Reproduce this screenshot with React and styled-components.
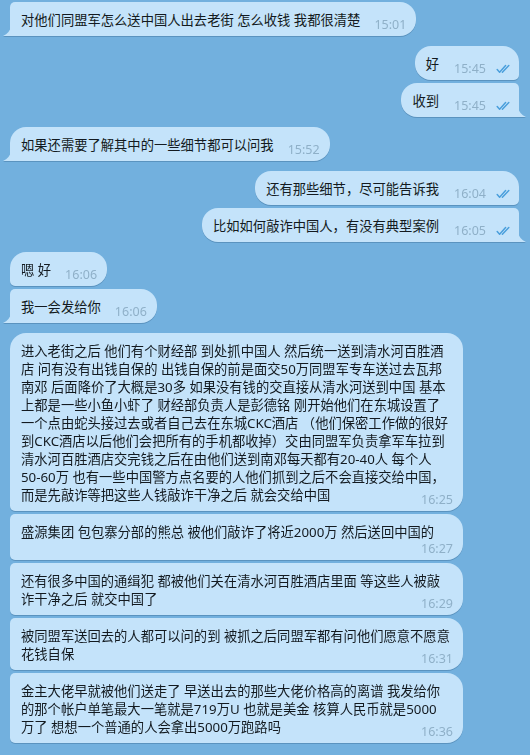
import React from 'react';
import styled, { createGlobalStyle } from 'styled-components';

const GlobalStyle = createGlobalStyle`
  html, body { margin: 0; padding: 0; background: #72b0de; }
  body {
    font-family: "Noto Sans", "Noto Sans CJK SC", sans-serif;
    overflow: hidden;
  }
`;

const Chat = styled.div`
  width: 530px;
  height: 755px;
  overflow: hidden;
  box-sizing: border-box;
  background: #72b0de;
  display: flex;
  flex-direction: column;
  padding: 2px 11px 0 10px;
`;

const Row = styled.div`
  display: flex;
  flex-shrink: 0;
  justify-content: ${(p) => (p.$out ? 'flex-end' : 'flex-start')};
  margin-top: ${(p) => p.$gap}px;
  filter: drop-shadow(0 1px 0.6px rgba(28, 72, 112, 0.28));
`;

const R = 16;
const r = 5;

const Bubble = styled.div`
  position: relative;
  display: flow-root;
  box-sizing: border-box;
  max-width: 453px;
  width: ${(p) => (p.$wide ? '453px' : 'auto')};
  padding: 9px ${(p) => (p.$out ? 7 : 10)}px 7px 11px;
  background: #c4e3fa;
  color: #131a20;
  font-size: 13.3px;
  line-height: 18px;
  border-top-left-radius: ${(p) => (p.$out ? R : p.$first ? R : r)}px;
  border-bottom-left-radius: ${(p) => (p.$out ? R : p.$last ? 0 : r)}px;
  border-top-right-radius: ${(p) => (!p.$out ? R : p.$first ? R : r)}px;
  border-bottom-right-radius: ${(p) => (!p.$out ? R : p.$last ? 0 : r)}px;
`;

const Tail = styled.svg`
  position: absolute;
  bottom: 0;
  width: 8px;
  height: 14px;
  ${(p) => (p.$out ? 'right: -7px; transform: scaleX(-1);' : 'left: -7px;')}
`;

const Spacer = styled.span`
  float: right;
  width: ${(p) => (p.$out ? 73 : 46)}px;
  height: 12px;
`;

const Meta = styled.span`
  position: absolute;
  right: ${(p) => (p.$out ? 7 : 10)}px;
  bottom: 4px;
  display: flex;
  align-items: center;
  gap: 10px;
  font-size: 12.5px;
  line-height: 14px;
  color: #8fb0c8;
  white-space: nowrap;
`;

const Checks = () => (
  <svg width="16" height="10" viewBox="0 0 16 10" aria-hidden="true">
    <path
      d="M1.2 5.6 L3.6 8.2 L9.6 1.6 M6.4 8.2 L12.8 1.6"
      stroke="#4a9fdc"
      strokeWidth="1.5"
      fill="none"
      strokeLinecap="round"
      strokeLinejoin="round"
    />
  </svg>
);

const messages = [
  { out: false, pos: 'last', time: '15:01', lines: ['对他们同盟军怎么送中国人出去老街 怎么收钱 我都很清楚'] },
  { out: true, pos: 'first', time: '15:45', lines: ['好'] },
  { out: true, pos: 'last', time: '15:45', lines: ['收到'] },
  { out: false, pos: 'single', time: '15:52', lines: ['如果还需要了解其中的一些细节都可以问我'] },
  { out: true, pos: 'first', time: '16:04', lines: ['还有那些细节，尽可能告诉我'] },
  { out: true, pos: 'last', time: '16:05', lines: ['比如如何敲诈中国人，有没有典型案例'] },
  { out: false, pos: 'first', time: '16:06', lines: ['嗯 好'] },
  { out: false, pos: 'last', time: '16:06', lines: ['我一会发给你'] },
  {
    out: false,
    pos: 'first',
    wide: true,
    time: '16:25',
    lines: [
      '进入老街之后 他们有个财经部 到处抓中国人 然后统一送到清水河百胜酒',
      '店 问有没有出钱自保的 出钱自保的前是面交50万同盟军专车送过去瓦邦',
      '南邓 后面降价了大概是30多 如果没有钱的交直接从清水河送到中国 基本',
      '上都是一些小鱼小虾了 财经部负责人是彭德铭 刚开始他们在东城设置了',
      '一个点由蛇头接过去或者自己去在东城CKC酒店 （他们保密工作做的很好',
      '到CKC酒店以后他们会把所有的手机都收掉）交由同盟军负责拿军车拉到',
      '清水河百胜酒店交完钱之后在由他们送到南邓每天都有20-40人 每个人',
      '50-60万  也有一些中国警方点名要的人他们抓到之后不会直接交给中国，',
      '而是先敲诈等把这些人钱敲诈干净之后 就会交给中国',
    ],
  },
  { out: false, pos: 'middle', wide: true, time: '16:27', lines: ['盛源集团 包包寨分部的熊总 被他们敲诈了将近2000万 然后送回中国的'] },
  {
    out: false,
    pos: 'middle',
    wide: true,
    time: '16:29',
    lines: ['还有很多中国的通缉犯 都被他们关在清水河百胜酒店里面 等这些人被敲', '诈干净之后 就交中国了'],
  },
  {
    out: false,
    pos: 'middle',
    wide: true,
    time: '16:31',
    lines: ['被同盟军送回去的人都可以问的到 被抓之后同盟军都有问他们愿意不愿意', '花钱自保'],
  },
  {
    out: false,
    pos: 'middle',
    wide: true,
    time: '16:36',
    lines: [
      '金主大佬早就被他们送走了 早送出去的那些大佬价格高的离谱 我发给你',
      '的那个帐户单笔最大一笔就是719万U 也就是美金 核算人民币就是5000',
      '万了 想想一个普通的人会拿出5000万跑路吗',
    ],
  },
];

function Message({ m, index }) {
  const first = m.pos === 'first' || m.pos === 'single';
  const last = m.pos === 'last' || m.pos === 'single';
  const gap = index === 0 ? 0 : first ? 10 : 3;
  return (
    <Row $out={m.out} $gap={gap}>
      <Bubble $out={m.out} $first={first} $last={last} $wide={m.wide}>
        {m.lines.map((l, i) => (
          <React.Fragment key={i}>
            {i > 0 && <br />}
            {l}
          </React.Fragment>
        ))}
        <Spacer $out={m.out} />
        <Meta $out={m.out}>
          <span>{m.time}</span>
          {m.out && <Checks />}
        </Meta>
        {last && (
          <Tail $out={m.out} viewBox="0 0 8 14" aria-hidden="true">
            <path d="M8.5 0 C8.5 6 6.5 11 0 14 L8.5 14 Z" fill="#c4e3fa" />
          </Tail>
        )}
      </Bubble>
    </Row>
  );
}

export default function App() {
  return (
    <>
      <GlobalStyle />
      <Chat>
        {messages.map((m, i) => (
          <Message key={i} m={m} index={i} />
        ))}
      </Chat>
    </>
  );
}
